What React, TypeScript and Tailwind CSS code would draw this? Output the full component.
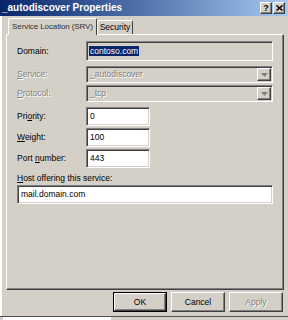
const sunken =
  "border border-[#808080] border-r-white border-b-white shadow-[inset_1px_1px_#404040,inset_-1px_-1px_#d4d0c8]";
const raised =
  "border border-white border-r-[#404040] border-b-[#404040] shadow-[inset_-1px_-1px_#808080]";

function Label({ text, u, disabled }: { text: string; u?: number; disabled?: boolean }) {
  const parts =
    u === undefined ? (
      text
    ) : (
      <>
        {text.slice(0, u)}
        <span className="underline">{text[u]}</span>
        {text.slice(u + 1)}
      </>
    );
  return (
    <span
      className={
        disabled
          ? "whitespace-nowrap text-[#808080] [text-shadow:1px_1px_#ffffff]"
          : "whitespace-nowrap text-black"
      }
    >
      {parts}
    </span>
  );
}

function Combo({ value }: { value: string }) {
  return (
    <div className={`flex h-[17px] flex-1 items-center bg-[#d4d0c8] ${sunken}`}>
      <span className="flex-1 pl-[3px] text-[#808080] [text-shadow:1px_1px_#ffffff]">{value}</span>
      <div className={`mr-[1px] flex h-[13px] w-[14px] items-center justify-center bg-[#d4d0c8] ${raised}`}>
        <svg width="7" height="4" viewBox="0 0 7 4">
          <path d="M0 0h7L3.5 4z" fill="#808080" />
        </svg>
      </div>
    </div>
  );
}

function Field({ value, w }: { value: string; w: string }) {
  return <div className={`flex h-[19px] items-center bg-white pl-[3px] ${w} ${sunken}`}>{value}</div>;
}

function Btn({ text, def, disabled }: { text: string; def?: boolean; disabled?: boolean }) {
  return (
    <div
      className={`flex h-[20px] w-[54px] items-center justify-center bg-[#d4d0c8] ${
        def ? "border border-black" : ""
      }`}
    >
      <div className={`flex h-full w-full items-center justify-center ${raised}`}>
        <span className={disabled ? "text-[#808080] [text-shadow:1px_1px_#ffffff]" : "text-black"}>
          {text}
        </span>
      </div>
    </div>
  );
}

export default function App() {
  return (
    <div
      className="flex h-[320px] w-[288px] flex-col overflow-hidden bg-[#d4d0c8] text-[8.5px] leading-none"
      style={{ fontFamily: "'Liberation Sans', Arial, sans-serif" }}
    >
      <div className="flex h-[16px] items-center bg-gradient-to-r from-[#0a246a] to-[#a6caf0] pl-[2px] pr-[3px]">
        <span className="flex-1 text-[10px] font-bold text-white">_autodiscover Properties</span>
        <div className={`flex h-[12px] w-[12px] items-center justify-center bg-[#d4d0c8] text-[9px] font-bold ${raised}`}>
          ?
        </div>
        <div className={`ml-[1px] flex h-[12px] w-[12px] items-center justify-center bg-[#d4d0c8] ${raised}`}>
          <svg width="7" height="6" viewBox="0 0 7 6">
            <path d="M0.5 0.5l6 5M6.5 0.5l-6 5" stroke="#000" strokeWidth="1.5" />
          </svg>
        </div>
      </div>

      <div className="flex flex-1 flex-col border-l-2 border-white px-[4px]">
        <div className="mt-[2px] flex items-end pl-[2px]">
          <div className="relative z-10 -mb-[1px] flex h-[17px] w-[89px] items-center justify-center whitespace-nowrap rounded-t-[2px] border-x border-t border-white border-r-[#404040] bg-[#d4d0c8] text-[8px] tracking-[-0.1px] text-[#303030]">
            Service Location (SRV)
          </div>
          <div className="flex h-[14px] w-[36px] items-center justify-center whitespace-nowrap rounded-t-[2px] border-x border-t border-white border-r-[#404040] bg-[#d4d0c8]">
            Security
          </div>
        </div>

        <div className={`flex h-[256px] flex-col px-[10px] pt-[6px] ${raised}`}>
          <div className="flex items-center">
            <span className="w-[69px]">
              <Label text="Domain:" />
            </span>
            <div className={`flex h-[20px] flex-1 items-center bg-[#d4d0c8] pl-[2px] ${sunken}`}>
              <span className="bg-[#0a246a] px-[1px] py-[1px] text-white">contoso.com</span>
            </div>
          </div>
          <div className="mt-[5px] flex items-center">
            <span className="w-[69px]">
              <Label text="Service:" u={0} disabled />
            </span>
            <Combo value="_autodiscover" />
          </div>
          <div className="mt-[2px] flex items-center">
            <span className="w-[69px]">
              <Label text="Protocol:" u={0} disabled />
            </span>
            <Combo value="_tcp" />
          </div>
          <div className="mt-[5px] flex items-center">
            <span className="w-[69px]">
              <Label text="Priority:" u={3} />
            </span>
            <Field value="0" w="w-[64px]" />
          </div>
          <div className="mt-[2px] flex items-center">
            <span className="w-[69px]">
              <Label text="Weight:" u={0} />
            </span>
            <Field value="100" w="w-[64px]" />
          </div>
          <div className="mt-[2px] flex items-center">
            <span className="w-[69px]">
              <Label text="Port number:" u={5} />
            </span>
            <Field value="443" w="w-[64px]" />
          </div>
          <div className="mt-[6px] flex flex-col gap-[2px]">
            <Label text="Host offering this service:" u={0} />
            <Field value="mail.domain.com" w="w-full" />
          </div>
        </div>

        <div className="mt-[2px] flex justify-end gap-[4px] pr-[1px]">
          <Btn text="OK" def />
          <Btn text="Cancel" />
          <Btn text="Apply" disabled />
        </div>
      </div>
      <div className="flex h-[4px] border-t border-[#505050]">
        <div className="ml-[3px] h-[3px] w-[108px] bg-white" />
      </div>
    </div>
  );
}
